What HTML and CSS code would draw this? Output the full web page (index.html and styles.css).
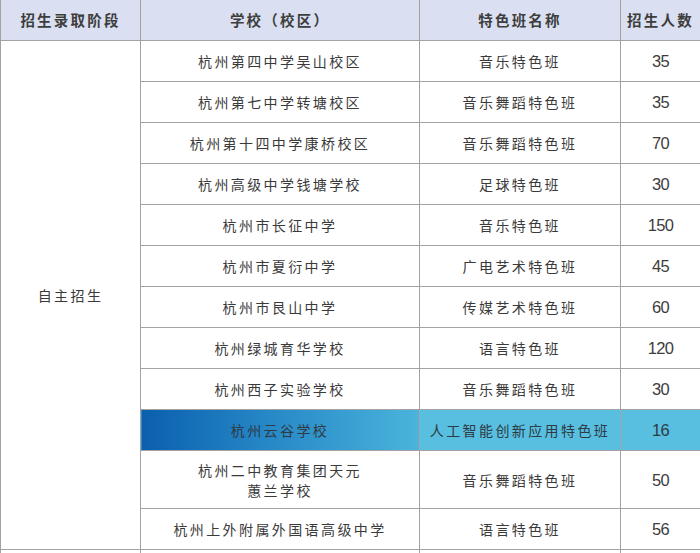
FILE: index.html
```html
<!DOCTYPE html>
<html lang="zh-CN">
<head>
<meta charset="utf-8">
<link rel="stylesheet" href="styles.css">
</head>
<body>
<table class="grid">
  <colgroup>
    <col class="c1"><col class="c2"><col class="c3"><col class="c4">
  </colgroup>
  <thead>
    <tr class="head">
      <th>招生录取阶段</th>
      <th>学校（校区）</th>
      <th>特色班名称</th>
      <th>招生人数</th>
    </tr>
  </thead>
  <tbody>
    <tr><td class="stage" rowspan="12">自主招生</td><td>杭州第四中学吴山校区</td><td>音乐特色班</td><td class="num">35</td></tr>
    <tr><td>杭州第七中学转塘校区</td><td>音乐舞蹈特色班</td><td class="num">35</td></tr>
    <tr><td>杭州第十四中学康桥校区</td><td>音乐舞蹈特色班</td><td class="num">70</td></tr>
    <tr><td>杭州高级中学钱塘学校</td><td>足球特色班</td><td class="num">30</td></tr>
    <tr><td>杭州市长征中学</td><td>音乐特色班</td><td class="num">150</td></tr>
    <tr><td>杭州市夏衍中学</td><td>广电艺术特色班</td><td class="num">45</td></tr>
    <tr><td>杭州市艮山中学</td><td>传媒艺术特色班</td><td class="num">60</td></tr>
    <tr><td>杭州绿城育华学校</td><td>语言特色班</td><td class="num">120</td></tr>
    <tr><td>杭州西子实验学校</td><td>音乐舞蹈特色班</td><td class="num">30</td></tr>
    <tr class="hl"><td class="hl-school">杭州云谷学校</td><td>人工智能创新应用特色班</td><td class="num">16</td></tr>
    <tr class="tall"><td>杭州二中教育集团天元<br>蕙兰学校</td><td>音乐舞蹈特色班</td><td class="num">50</td></tr>
    <tr><td>杭州上外附属外国语高级中学</td><td>语言特色班</td><td class="num">56</td></tr>
    <tr class="tail"><td></td><td></td><td></td><td></td></tr>
  </tbody>
</table>
</body>
</html>
```

FILE: styles.css
```css
html, body {
  margin: 0;
  padding: 0;
  background: #ffffff;
}

body {
  width: 700px;
  height: 553px;
  overflow: hidden;
  font-family: "Noto Sans CJK SC", "Noto Sans", sans-serif;
  color: #3a3a3a;
}

.grid {
  width: 700px;
  border-collapse: collapse;
  table-layout: fixed;
}

.c1 { width: 140px; }
.c2 { width: 279px; }
.c3 { width: 201px; }
.c4 { width: 80px; }

.grid th,
.grid td {
  border: 1px solid #a3a3a3;
  padding: 0;
  text-align: center;
  vertical-align: middle;
  font-size: 14px;
  letter-spacing: 2.4px;
  line-height: 20px;
  height: 40px;
}

.grid tr.head th {
  border-top: none;
  background: #dae0f1;
  font-weight: 700;
  font-size: 14.5px;
  color: #3d3d3d;
  letter-spacing: 2.2px;
}

.grid td.num {
  font-family: "Liberation Sans", Arial, sans-serif;
  font-size: 16.5px;
  letter-spacing: -0.6px;
  color: #3d3d3d;
}

.grid tr.hl td {
  background: #58bfe0;
  color: #2e3a44;
}

.grid tr.hl td.hl-school {
  background: linear-gradient(90deg, #0b5fae 0%, #2687c6 45%, #4ab4dc 100%);
}

.grid tr.tall td {
  height: 57px;
}

.grid tr.tail td {
  height: 20px;
}
```
